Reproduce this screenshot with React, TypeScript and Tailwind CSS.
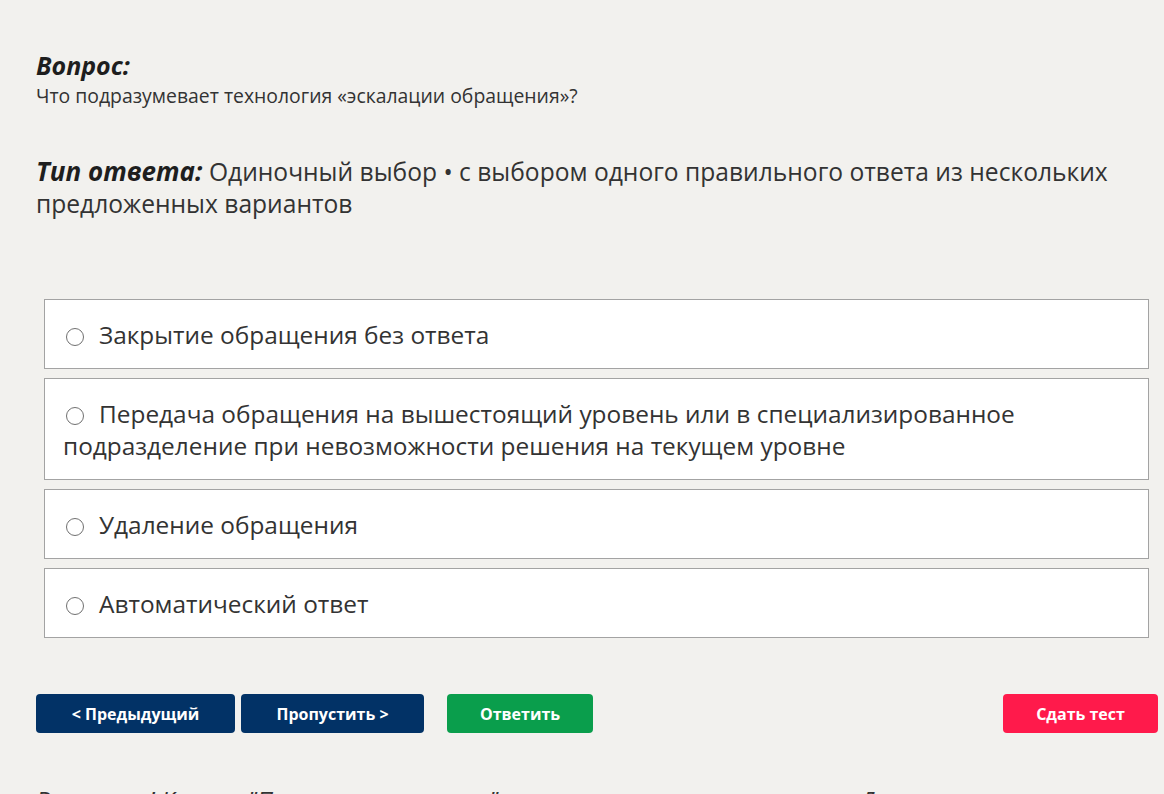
const options = [
  "Закрытие обращения без ответа",
  "Передача обращения на вышестоящий уровень или в специализированное подразделение при невозможности решения на текущем уровне",
  "Удаление обращения",
  "Автоматический ответ",
];

function Radio() {
  return (
    <span className="relative top-[1px] mr-[15px] ml-[3px] inline-block h-[18px] w-[18px] rounded-full border-[1.5px] border-[#707070] bg-white align-[-1px]" />
  );
}

export default function App() {
  return (
    <div className="h-[794px] overflow-hidden bg-[#f2f1ee] pt-[48px] pr-[6px] pl-[36px] font-['Open_Sans',sans-serif] text-[#222]">
      {/* Question */}
      <h2 className="text-[25px] leading-[34px] font-bold italic text-[#1e1e1e]">
        Вопрос:
      </h2>
      <p className="text-[19.4px] leading-[27px] text-[#333]">
        Что подразумевает технология «эскалации обращения»?
      </p>

      {/* Answer type */}
      <p className="mt-[46px] text-[24.6px] leading-[32px] text-[#333]">
        <span className="text-[26px] font-bold italic text-[#1e1e1e]">
          Тип ответа:
        </span>{" "}
        Одиночный выбор • с выбором одного правильного ответа из нескольких
        предложенных вариантов
      </p>

      {/* Options */}
      <div className="mt-[79px] mr-[9px] ml-[8px] flex flex-col gap-[9px]">
        {options.map((o) => (
          <label
            key={o}
            className="block cursor-pointer border border-[#a3a3a3] bg-white px-[18px] pt-[19px] pb-[17px] text-[24.4px] leading-[32px] text-[#333]"
          >
            <Radio />
            {o}
          </label>
        ))}
      </div>

      {/* Buttons */}
      <div className="mt-[56px] flex items-center">
        <button className="h-[39px] w-[199px] rounded-[4px] bg-[#023266] text-[16px] font-bold text-white">
          &lt; Предыдущий
        </button>
        <button className="ml-[6px] h-[39px] w-[183px] rounded-[4px] bg-[#023266] text-[16px] font-bold text-white">
          Пропустить &gt;
        </button>
        <button className="ml-[23px] h-[39px] w-[146px] rounded-[4px] bg-[#0a9e4c] text-[16px] font-bold text-white">
          Ответить
        </button>
        <button className="ml-auto h-[39px] w-[155px] rounded-[4px] bg-[#ff1a4b] text-[16px] font-bold text-white">
          Сдать тест
        </button>
      </div>

      <p className="mt-[51px] text-[24px] leading-[32px] whitespace-nowrap text-[#333] italic">
        Внимание! Кнопка "Пропустить вопрос" переносит его в конец теста. Для
        возврата к нему
      </p>
    </div>
  );
}
